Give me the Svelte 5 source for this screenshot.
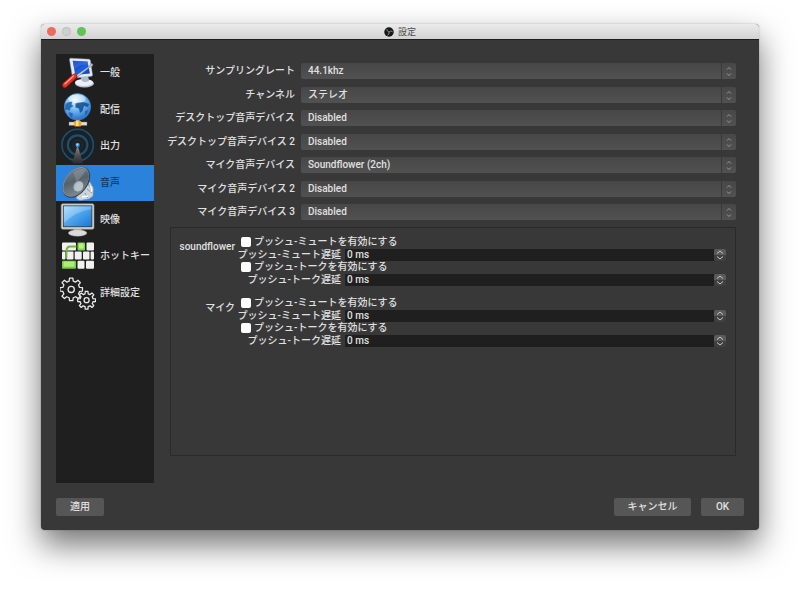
<script>
  const pages = [
    { id: 'general', name: '一般' },
    { id: 'stream', name: '配信' },
    { id: 'output', name: '出力' },
    { id: 'audio', name: '音声' },
    { id: 'video', name: '映像' },
    { id: 'hotkeys', name: 'ホットキー' },
    { id: 'advanced', name: '詳細設定' }
  ];
  let current = $state('audio');

  const devices = ['Disabled', 'Soundflower (2ch)'];
  const fields = $state([
    { id: 'rate', label: 'サンプリングレート', value: '44.1khz', options: ['44.1khz', '48khz'] },
    { id: 'channels', label: 'チャンネル', value: 'ステレオ', options: ['ステレオ', 'モノラル'] },
    { id: 'desktop1', label: 'デスクトップ音声デバイス', value: 'Disabled', options: devices },
    { id: 'desktop2', label: 'デスクトップ音声デバイス 2', value: 'Disabled', options: devices },
    { id: 'mic1', label: 'マイク音声デバイス', value: 'Soundflower (2ch)', options: devices },
    { id: 'mic2', label: 'マイク音声デバイス 2', value: 'Disabled', options: devices },
    { id: 'mic3', label: 'マイク音声デバイス 3', value: 'Disabled', options: devices }
  ]);

  const makeActions = () => [
    { id: 'mute', enable: 'プッシュ-ミュートを有効にする', delayLabel: 'プッシュ-ミュート遅延', on: false, delay: 0 },
    { id: 'talk', enable: 'プッシュ-トークを有効にする', delayLabel: 'プッシュ-トーク遅延', on: false, delay: 0 }
  ];
  const sources = $state([
    { id: 'sf', name: 'soundflower', actions: makeActions() },
    { id: 'mic', name: 'マイク', actions: makeActions() }
  ]);

  // Closed outline of a cog with `n` teeth around (cx, cy)
  function gear(cx, cy, outer, inner, n) {
    const pts = [];
    for (let i = 0; i < n; i++) {
      const a = (i / n) * Math.PI * 2 - Math.PI / 2;
      const s = (Math.PI * 2) / n;
      for (const [o, r] of [[-0.3, inner], [-0.19, outer], [0.19, outer], [0.3, inner]]) {
        pts.push((cx + Math.cos(a + o * s) * r).toFixed(2) + ' ' + (cy + Math.sin(a + o * s) * r).toFixed(2));
      }
    }
    return 'M' + pts.join('L') + 'Z';
  }
  const bigGear = gear(11.2, 14.4, 11.4, 8.6, 8);
  const smallGear = gear(26.6, 25.2, 9, 6.6, 8);
</script>

{#snippet icon(id)}
  <svg class="icon" viewBox="0 0 36 36" aria-hidden="true">
    {#if id === 'general'}
      <defs>
        <linearGradient id="g-scr" x1="0" y1="0" x2="1" y2="1"><stop offset="0" stop-color="#0a2f9c" /><stop offset=".55" stop-color="#1d5fe0" /><stop offset="1" stop-color="#0c3cae" /></linearGradient>
      </defs>
      <ellipse cx="24.5" cy="28.5" rx="9.5" ry="4" fill="#b9c4d6" />
      <ellipse cx="24" cy="27.5" rx="9" ry="3.4" fill="#edf1f7" />
      <path d="M20 21l8-1 1 6q-4 2-7 0z" fill="#aebacd" />
      <path d="M10.5 3.2L29 4.2q1.2.2 1.4 1.3L32.5 20q0 1-1 1.2L14 23q-1.400-.2-1.600-1.300L9.500 4.600q0-1.200 1-1.400z" fill="#e4eaf4" stroke="#98a5bb" stroke-width=".5" />
      <path d="M12.700 5.700L27.600 6.600l2.300 12-14.700 1.500z" fill="url(#g-scr)" />
      <path d="M12.700 5.700L27.600 6.600l.6 3Q19 9 14.500 15z" fill="#4f86ef" opacity=".4" />
      <path d="M16 20.500L29.500 11l1.500-2.400 1.800.4-.2 2-2.600 1.100L17.500 22z" fill="#c5ced9" stroke="#66717f" stroke-width=".5" />
      <path d="M4.700 30.300L14.500 21.500" stroke="#8f120c" stroke-width="5.600" stroke-linecap="round" />
      <path d="M4.800 30L14.500 21.200" stroke="#e63427" stroke-width="4.400" stroke-linecap="round" />
      <path d="M4.800 28.900L13.500 21" stroke="#ff9c8c" stroke-width="1.300" stroke-linecap="round" />
    {:else if id === 'stream'}
      <defs>
        <radialGradient id="g-globe" cx=".4" cy=".25" r=".8"><stop offset="0" stop-color="#e6f6ff" /><stop offset=".45" stop-color="#78bdf4" /><stop offset="1" stop-color="#1b66c4" /></radialGradient>
      </defs>
      <path d="M9 30h18v3.400H9z" fill="#dedede" stroke="#777" stroke-width=".4" />
      <path d="M16 26h3.500v4H16z" fill="#c9cdd2" />
      <rect x="14.200" y="28.800" width="7" height="5.600" rx="1.200" fill="#f6a21f" />
      <rect x="16" y="29" width="2.500" height="5" fill="#ffe08a" />
      <circle cx="17.500" cy="14.800" r="13.200" fill="url(#g-globe)" stroke="#3d87d6" stroke-width=".6" />
      <path d="M5.500 12q3-3 7-2.500l-1 3 2 1.500-3 2-1 3-2-1.500-2.500.5z" fill="#15579f" opacity=".8" />
      <path d="M15.500 11.500q6-3 13.500.5l-1 3-4-1-1.500 5-2.500 2-1-4.500-3.500-1z" fill="#134f93" opacity=".88" />
      <path d="M9 20l4 1.500-1 4q-3-2-3-5.500zM25 19l3-1q-.5 4-3 5z" fill="#15579f" opacity=".7" />
      <ellipse cx="17" cy="6.800" rx="8.500" ry="4.400" fill="#fff" opacity=".45" />
    {:else if id === 'output'}
      <defs>
        <linearGradient id="g-cone" x1="0" y1="0" x2="0" y2="1"><stop offset="0" stop-color="#9a9a9a" /><stop offset=".5" stop-color="#555" /><stop offset="1" stop-color="#292929" /></linearGradient>
      </defs>
      <g fill="none" stroke="#155179">
        <circle cx="17.600" cy="17" r="15.700" stroke-width="1.600" />
        <circle cx="17.600" cy="17" r="9.700" stroke-width="2.200" />
        <circle cx="17.600" cy="17" r="4.800" stroke-width="1" opacity=".35" />
      </g>
      <path d="M17.600 17l5.400 18q-5.500 1.500-10.800 0z" fill="url(#g-cone)" />
      <circle cx="17.600" cy="17" r="2.200" fill="#238ce0" /><circle cx="17.400" cy="16.600" r="1.100" fill="#a8deff" />
    {:else if id === 'audio'}
      <defs>
        <linearGradient id="g-horn" x1="0" y1="0" x2="1" y2="1"><stop offset="0" stop-color="#7d8890" /><stop offset=".45" stop-color="#56626b" /><stop offset="1" stop-color="#8b969e" /></linearGradient>
      </defs>
      <path d="M22 20l8-3 3.500 6-.5 8-4 3-9 1.500-4-2z" fill="#cbd5dd" stroke="#7c8992" stroke-width=".5" />
      <path d="M28 17l1.500 5 4 2M27 24l5 4M25 28l3 5" stroke="#87939c" stroke-width="1" fill="none" />
      <path d="M30 21l2 3-1 3M22 32l6-1" stroke="#fff" stroke-width="1.300" fill="none" />
      <g transform="rotate(37 16 17)">
        <ellipse cx="16.500" cy="17" rx="11.200" ry="17.400" fill="#39444c" />
        <ellipse cx="15.700" cy="17" rx="10.600" ry="16.600" fill="#8e99a2" />
        <ellipse cx="16.200" cy="17.100" rx="10.400" ry="16" fill="url(#g-horn)" />
        <path d="M17 17L8 11Q11 1 17 1.500z" fill="#9aa5ad" opacity=".4" />
        <ellipse cx="20.500" cy="19" rx="4.600" ry="5.600" fill="#a9b4bc" />
        <ellipse cx="21.300" cy="19.200" rx="3.700" ry="4.700" fill="#b9c3ca" />
      </g>
    {:else if id === 'video'}
      <defs>
        <linearGradient id="g-tv" x1="0" y1="0" x2="1" y2="1"><stop offset="0" stop-color="#a5d6fb" /><stop offset=".5" stop-color="#4ba2ec" /><stop offset="1" stop-color="#1c76d2" /></linearGradient>
      </defs>
      <path d="M14 26h7l1 4h-9z" fill="#b9bdb9" />
      <ellipse cx="17.600" cy="31" rx="9.300" ry="3.200" fill="#d9dcd9" stroke="#999" stroke-width=".4" />
      <rect x="1.200" y="1.800" width="32.800" height="25.400" rx="1.600" fill="#d8dad6" stroke="#8d918c" stroke-width=".6" />
      <rect x="2.900" y="3.400" width="29.400" height="21.800" fill="#394047" />
      <rect x="3.800" y="4.300" width="27.600" height="20" fill="url(#g-tv)" />
      <path d="M3.800 4.300h27.600v3Q16 9 3.800 21z" fill="#d2edff" opacity=".3" />
    {:else if id === 'hotkeys'}
      <g fill="#f1f1ee">
        <rect x="2" y="4.600" width="14" height="8" rx="1" /><rect x="26.500" y="4.600" width="7.500" height="8" rx="1" />
        <rect x="2" y="13.600" width="3.500" height="8" rx="1" /><rect x="6.500" y="13.600" width="7" height="8" rx="1" /><rect x="14.700" y="13.600" width="7" height="8" rx="1" /><rect x="23" y="13.600" width="6.500" height="8" rx="1" /><rect x="30.600" y="13.600" width="3.400" height="8" rx="1" />
        <rect x="17.500" y="22.800" width="7" height="8" rx="1" /><rect x="26" y="22.800" width="8" height="8" rx="1" />
      </g>
      <rect x="17.500" y="4.600" width="7.500" height="8" rx="1" fill="#86d64e" /><rect x="19" y="5.500" width="4.500" height="5" rx="1" fill="#b9ef8c" />
      <rect x="2" y="22.800" width="14" height="8" rx="1" fill="#7bcb43" /><rect x="3.500" y="23.600" width="11" height="5.200" rx="1" fill="#aeea7c" />
      <path d="M6.500 20v-7q0-4.500 4-4.500h6" fill="none" stroke="#6cb83b" stroke-width="1.800" />
    {:else}
      <g fill="#1f1f1f" stroke="#e9e9e9" stroke-width="1.300" stroke-linejoin="round">
        <path d={bigGear} /><circle cx="11.200" cy="14.400" r="3.100" />
        <path d={smallGear} /><circle cx="26.600" cy="25.200" r="2.500" />
      </g>
    {/if}
  </svg>
{/snippet}

<main class="desktop">
  <section class="window" aria-label="設定">
    <header class="titlebar">
      <div class="lights">
        <button class="light red" aria-label="閉じる"></button>
        <button class="light off" aria-label="しまう"></button>
        <button class="light green" aria-label="拡大"></button>
      </div>
      <h1>
        <svg class="logo" viewBox="0 0 20 20" aria-hidden="true">
          <circle cx="10" cy="10" r="9.500" fill="#171717" />
          <g fill="none" stroke="#a0a0a0" stroke-width="1.500">
            <path d="M10 10Q5 9 6 4" /><path d="M10 10Q5 9 6 4" transform="rotate(120 10 10)" /><path d="M10 10Q5 9 6 4" transform="rotate(240 10 10)" />
          </g>
        </svg>
        設定
      </h1>
    </header>

    <div class="body">
      <nav class="sidebar">
        <ul>
          {#each pages as page}
            <li>
              <button class="page" class:selected={current === page.id} onclick={() => (current = page.id)}>
                {@render icon(page.id)}
                <span>{page.name}</span>
              </button>
            </li>
          {/each}
        </ul>
      </nav>

      <div class="content">
        <div class="fields">
          {#each fields as field}
            <div class="field">
              <label for={field.id}>{field.label}</label>
              <div class="combo">
                <select id={field.id} bind:value={field.value}>
                  {#each field.options as option}<option>{option}</option>{/each}
                </select>
                <svg class="arrows" viewBox="0 0 14 16" aria-hidden="true"><path d="M5 6.500l2-2 2 2M5 10.500l2 2 2-2" /></svg>
              </div>
            </div>
          {/each}
        </div>

        <div class="group">
          {#each sources as source}
            <div class="source" role="group" aria-labelledby={source.id}>
              <div class="source-name" id={source.id}>{source.name}</div>
              <div class="actions">
                {#each source.actions as action}
                  <label class="check">
                    <input type="checkbox" bind:checked={action.on} />
                    <span>{action.enable}</span>
                  </label>
                  <div class="delay">
                    <label for="{source.id}-{action.id}">{action.delayLabel}</label>
                    <input id="{source.id}-{action.id}" type="text" value="{action.delay} ms" />
                    <div class="stepper">
                      <button aria-label="増やす" onclick={() => (action.delay += 1)}><svg viewBox="0 0 12 6" aria-hidden="true"><path d="M3 4.500l3-2.500 3 2.500" /></svg></button>
                      <button aria-label="減らす" onclick={() => (action.delay = Math.max(0, action.delay - 1))}><svg viewBox="0 0 12 6" aria-hidden="true"><path d="M3 1.500l3 2.500 3-2.500" /></svg></button>
                    </div>
                  </div>
                {/each}
              </div>
            </div>
          {/each}
        </div>
      </div>
    </div>

    <footer>
      <button class="push">適用</button>
      <div class="confirm">
        <button class="push wide">キャンセル</button>
        <button class="push small">OK</button>
      </div>
    </footer>
  </section>
</main>

<style>
  :global(body) {
    background: #fff;
  }
  .desktop {
    box-sizing: border-box;
    min-height: 100vh;
    padding: 24px 41px 59px;
    display: flex;
    overflow: hidden;
    font: 500 10px/12px Roboto, 'Noto Sans CJK JP', sans-serif;
    color: #e0e0e0;
  }
  button,
  input,
  select {
    font: inherit;
    color: inherit;
    margin: 0;
    padding: 0;
    border: 0;
    border-radius: 0;
    background: none;
    appearance: none;
  }
  .window {
    flex: 1;
    min-width: 0;
    display: flex;
    flex-direction: column;
    background: #383838;
    border-radius: 4px;
    box-shadow: 0 15px 32px rgba(0, 0, 0, 0.55), 0 0 2px rgba(0, 0, 0, 0.25);
  }

  .titlebar {
    display: grid;
    grid-template-columns: 1fr auto 1fr;
    align-items: center;
    height: 15px;
    border-bottom: 1px solid #1c1c1c;
    border-radius: 4px 4px 0 0;
    background: linear-gradient(#ebebeb, #d2d2d2);
  }
  .lights {
    display: flex;
    gap: 6px;
    padding-left: 6px;
  }
  .light {
    width: 9px;
    height: 9px;
    border-radius: 50%;
  }
  .red {
    background: #ed6a5f;
  }
  .off {
    background: #cfcfcf;
    box-shadow: inset 0 0 0 1px #c2c2c2;
  }
  .green {
    background: #5fc454;
  }
  h1 {
    margin: 0;
    display: flex;
    align-items: center;
    gap: 4px;
    font-size: 9px;
    line-height: 12px;
    font-weight: 400;
    color: #4c4c4c;
  }
  .logo {
    width: 10px;
    height: 10px;
  }

  .body {
    flex: 1;
    display: flex;
    gap: 16px;
    padding: 14px 23px 0 15px;
  }
  .sidebar {
    width: 98px;
    flex: none;
    background: #1f1f1f;
  }
  ul {
    list-style: none;
    margin: 0;
    padding: 1px 0 0;
    height: 256px;
    display: flex;
    flex-direction: column;
  }
  li {
    flex: 1;
    display: flex;
  }
  .page {
    flex: 1;
    display: flex;
    align-items: center;
    gap: 4px;
    padding-left: 4px;
    text-align: left;
    white-space: nowrap;
  }
  .selected {
    background: #2a82da;
    color: #16395f;
  }
  .icon {
    width: 36px;
    height: 36px;
    flex: none;
  }

  .content {
    flex: 1;
    min-width: 0;
    display: flex;
    flex-direction: column;
    gap: 7px;
    padding: 9px 0 27px;
  }
  .fields {
    height: 157px;
    display: flex;
    flex-direction: column;
    justify-content: space-between;
  }
  .field {
    display: flex;
    align-items: center;
    gap: 6px;
    height: 16px;
  }
  .field > label {
    width: 125px;
    flex: none;
    display: flex;
    justify-content: flex-end;
    line-height: 14px;
    white-space: nowrap;
  }
  .combo {
    flex: 1;
    display: grid;
    height: 16px;
    border-radius: 2px;
    background: linear-gradient(#474747, #515151);
    overflow: hidden;
  }
  .combo > * {
    grid-area: 1 / 1;
  }
  select {
    width: 100%;
    height: 16px;
    padding-left: 7px;
  }
  option {
    background: #383838;
  }
  .arrows {
    justify-self: end;
    width: 14px;
    height: 16px;
    border-left: 1px solid #393939;
    fill: none;
    stroke: #989898;
    pointer-events: none;
  }

  .group {
    flex: 1;
    display: flex;
    flex-direction: column;
    gap: 11px;
    padding: 8px 9px 7px;
    border: 1px solid #2a2a2a;
  }
  .source {
    display: flex;
    gap: 6px;
  }
  .source-name {
    width: 55px;
    padding-top: 5px;
    display: flex;
    justify-content: flex-end;
    white-space: nowrap;
  }
  .actions {
    flex: 1;
    min-width: 0;
  }
  .check {
    display: flex;
    align-items: center;
    gap: 3px;
    height: 12px;
    width: max-content;
  }
  .check input {
    width: 10px;
    height: 10px;
    border-radius: 2px;
    background: #fff;
  }
  .check input:checked {
    background: #2a82da;
    box-shadow: inset 0 0 0 2px #fff;
  }
  .delay {
    display: flex;
    align-items: center;
    height: 13px;
  }
  .delay label {
    width: 100px;
    flex: none;
    display: flex;
    justify-content: flex-end;
    white-space: nowrap;
  }
  .delay input {
    flex: 1;
    min-width: 0;
    height: 12px;
    margin-left: 4px;
    padding-left: 2px;
    background: #1f1f1f;
  }
  .stepper {
    display: flex;
    flex-direction: column;
    width: 12px;
  }
  .stepper button {
    height: 6px;
    display: flex;
    background: #404040;
    border-radius: 0 0 2px 2px;
  }
  .stepper button:first-child {
    background: #5a5a5a;
    border-radius: 2px 2px 0 0;
  }
  .stepper svg {
    width: 12px;
    height: 6px;
    fill: none;
    stroke: #c8c8c8;
  }

  footer {
    display: flex;
    justify-content: space-between;
    padding: 15px 15px 14px;
  }
  .confirm {
    display: flex;
    gap: 10px;
  }
  .push {
    min-width: 48px;
    height: 18px;
    border-radius: 2px;
    background: #565656;
  }
  .wide {
    min-width: 77px;
  }
  .small {
    min-width: 43px;
  }
</style>
